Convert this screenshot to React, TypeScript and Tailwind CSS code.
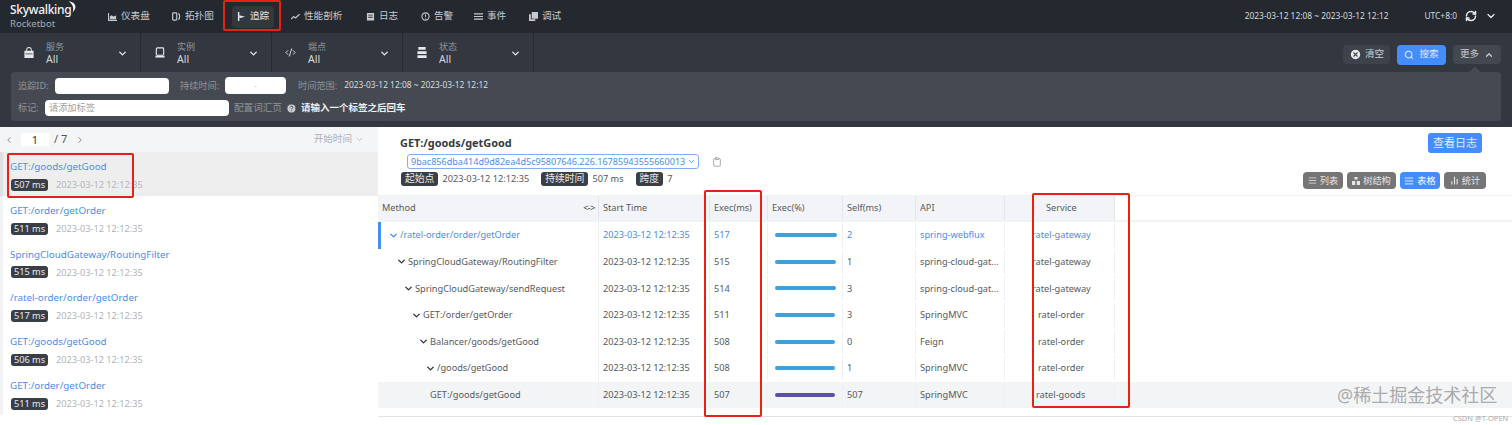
import type { ReactNode } from 'react'
import { ChevronDown, ChevronUp, ChevronLeft, ChevronRight, Search, RefreshCw, Code2, CircleHelp, CircleX, AlignJustify, BarChart2, Clipboard } from 'lucide-react'

const font = { fontFamily: '"Noto Sans", "Noto Sans CJK SC", sans-serif' }

function NavIcon({ name }: { name: string }) {
  const c = 'w-[9px] h-[9px] shrink-0'
  switch (name) {
    case 'chart':
      return <svg viewBox="0 0 10 10" className={c} fill="currentColor"><path d="M0 1h1.2v7.6H10V10H0z" /><path d="M2 8V5l2-1.5L6 5l3-1v4z" /></svg>
    case 'topo':
      return <svg viewBox="0 0 10 10" className={c} fill="none" stroke="currentColor" strokeWidth="1.3"><rect x="0.7" y="1" width="4.6" height="8" rx="1" /><path d="M7 1.5c2 .5 2 6.5 0 7" /></svg>
    case 'trace':
      return <svg viewBox="0 0 10 10" className={c} fill="currentColor"><path d="M1 0h1.6v10H1z" /><path d="M2.6 3.5L9 5.2 2.6 7z" /></svg>
    case 'perf':
      return <svg viewBox="0 0 10 10" className={c} fill="none" stroke="currentColor" strokeWidth="1.3"><path d="M0 8l3-3 2 1.6L9.5 2.5" /></svg>
    case 'log':
      return <svg viewBox="0 0 10 10" className={c} fill="currentColor"><path d="M1 1h8v8.5H1zM2.5 3v1h5V3zm0 2.4v1h5v-1z" fillRule="evenodd" /></svg>
    case 'alarm':
      return <svg viewBox="0 0 10 10" className={c} fill="none" stroke="currentColor" strokeWidth="1.2"><circle cx="5" cy="5" r="4" /><path d="M5 2.8v2.6M5 6.3v1" /></svg>
    case 'event':
      return <svg viewBox="0 0 10 10" className={c} fill="none" stroke="currentColor" strokeWidth="1.3"><path d="M0 2h10M0 5h10M0 8h10" /></svg>
    default:
      return <svg viewBox="0 0 10 10" className={c} fill="currentColor"><path d="M3 0h7v7.5H3z" /><path d="M0 2.5h2V8h5v2H0z" /></svg>
  }
}

const navItems = [
  { icon: 'chart', label: '仪表盘', cls: 'ml-[19px] w-[64px]' },
  { icon: 'topo', label: '拓扑图', cls: 'w-[65px]' },
  { icon: 'trace', label: '追踪', cls: 'w-[54px]', active: true },
  { icon: 'perf', label: '性能剖析', cls: 'w-[75px]' },
  { icon: 'log', label: '日志', cls: 'w-[55px]' },
  { icon: 'alarm', label: '告警', cls: 'w-[53px]' },
  { icon: 'event', label: '事件', cls: 'w-[55px]' },
  { icon: 'debug', label: '调试', cls: 'w-[50px]' },
]

function TopBar() {
  return (
    <div className="h-[33px] bg-[#24292f] flex items-center text-[#c6cad0] text-[9.6px] shrink-0">
      <div className="ml-[10px] w-[74px] shrink-0 leading-none">
        <div className="relative text-[#f1f3f5] text-[12px] font-medium tracking-tight h-[13px] -mt-[1px]">
          Skywalking
          <svg viewBox="0 0 10 12" className="absolute left-[58px] -top-[3px] w-[9px] h-[12px]" fill="#f1f3f5"><path d="M1 0c7 0 10 7 4 12 2-5 0-9-4-12z" /></svg>
        </div>
        <div className="text-[#a4a9b0] text-[9.5px] mt-[2px]">Rocketbot</div>
      </div>
      {navItems.map(n => (
        <div key={n.label} className={`${n.cls} shrink-0 flex items-center`}>
          <div className={`flex items-center gap-[4px] h-[22px] px-[5px] rounded-sm ${n.active ? 'bg-[#333840] text-[#e4e6ea]' : ''}`}>
            <NavIcon name={n.icon} />
            <span>{n.label}</span>
          </div>
        </div>
      ))}
      <div className="ml-auto flex items-center text-[#d7dade] text-[8.4px]">
        <span>2023-03-12 12:08 ~ 2023-03-12 12:12</span>
        <span className="ml-[36px]">UTC+8:0</span>
        <RefreshCw size={12} strokeWidth={3} className="ml-[8px] text-[#e8eaed]" />
        <ChevronDown size={12} strokeWidth={2.5} className="ml-[8px] mr-[15px] text-[#e8eaed]" />
      </div>
    </div>
  )
}

function FilterCell({ icon, label }: { icon: ReactNode; label: string }) {
  return (
    <div className="w-[131px] first:w-[141px] first:pl-[10px] h-[39px] border-r border-[#262a30] flex items-center shrink-0 relative">
      <div className="w-[36px] flex justify-end pr-[12px] text-[#e6e8eb]">{icon}</div>
      <div className="leading-[12px]">
        <div className="text-[#8f959c] text-[9px]">{label}</div>
        <div className="text-[#d5d8dc] text-[10.5px]">All</div>
      </div>
      <ChevronDown size={11} strokeWidth={3} className="absolute right-[12px] top-[15px] text-[#e6e8eb]" />
    </div>
  )
}

function FilterBar() {
  return (
    <div className="h-[94px] bg-[#333840] shrink-0 relative text-[9.2px]">
      <div className="h-[39px] flex items-center">
        <div className="flex">
          <FilterCell label="服务" icon={<svg viewBox="0 0 10 12" className="w-[10px] h-[11px]" fill="currentColor"><path d="M2 4V3a3 3 0 016 0v1h2v8H0V4zm1 0h4V3a2 2 0 00-4 0zM1.2 7v1h7.6V7z" fillRule="evenodd" /></svg>} />
          <FilterCell label="实例" icon={<svg viewBox="0 0 10 12" className="w-[10px] h-[11px]" fill="none" stroke="currentColor" strokeWidth="1.2"><rect x="1" y="1" width="8" height="8" rx="1" /><path d="M0 10.5h10" strokeWidth="2" /></svg>} />
          <FilterCell label="端点" icon={<Code2 size={11} strokeWidth={2} />} />
          <FilterCell label="状态" icon={<svg viewBox="0 0 10 12" className="w-[10px] h-[11px]" fill="currentColor"><path d="M1 0h8v3H1zM0 4.5h10v3H0zM0 9h10v3H0z" /></svg>} />
        </div>
        <div className="ml-auto mr-[11px] flex items-center gap-[7px] mt-[4px] text-[9.6px]">
          <button className="h-[19px] w-[47px] bg-[#3e434b] rounded-sm flex items-center justify-center gap-[3px] text-[#c9ccd1]"><CircleX size={13} fill="#e8e9eb" stroke="#3e434b" strokeWidth={2.5} />清空</button>
          <button className="h-[20px] w-[49px] bg-[#448dfe] rounded-sm flex items-center justify-center gap-[5px] text-[#dfeaff]"><Search size={10} strokeWidth={2.5} />搜索</button>
          <button className="h-[19px] w-[48px] bg-[#434850] rounded-sm flex items-center justify-center gap-[5px] text-[#c9ccd1]">更多<ChevronUp size={10} strokeWidth={3} /></button>
        </div>
      </div>
      <div className="relative mx-[11px] h-[49px] bg-[#454a52] text-[#8e939a] rounded-sm">
        <div className="absolute right-[22px] -top-[4px] w-[8px] h-[8px] rotate-45 bg-[#454a52]" />
        <div className="flex items-center h-[27px] pl-[7px]">
          <span className="w-[37px]">追踪ID:</span>
          <div className="w-[114px] h-[16px] bg-white rounded-sm" />
          <span className="ml-[11px] w-[45px]">持续时间:</span>
          <div className="w-[61px] h-[17px] bg-white rounded-sm flex items-center justify-center text-[#ccc]">-</div>
          <span className="ml-[12px]">时间范围:</span>
          <span className="ml-[7px] text-[#d8dbde] text-[8.4px]">2023-03-12 12:08 ~ 2023-03-12 12:12</span>
        </div>
        <div className="flex items-center h-[18px] pl-[7px]">
          <span className="w-[27px]">标记:</span>
          <div className="w-[184px] h-[16px] bg-white rounded-sm text-[#9a9fa6] pl-[4px] leading-[16px]">请添加标签</div>
          <span className="ml-[5px] text-[9.6px]">配置词汇页</span>
          <CircleHelp size={11} fill="#c8cbd0" stroke="#454a52" strokeWidth={2} className="ml-[4px]" />
          <span className="ml-[4px] text-[#eef0f2] font-bold text-[9.5px]">请输入一个标签之后回车</span>
        </div>
      </div>
    </div>
  )
}

const traces = [
  ['GET:/goods/getGood', '507 ms'],
  ['GET:/order/getOrder', '511 ms'],
  ['SpringCloudGateway/RoutingFilter', '515 ms'],
  ['/ratel-order/order/getOrder', '517 ms'],
  ['GET:/goods/getGood', '506 ms'],
  ['GET:/order/getOrder', '511 ms'],
]

function TraceList() {
  return (
    <div className="w-[378px] shrink-0 overflow-hidden">
      <div className="h-[25px] bg-[#f4f5f7] flex items-center text-[#555]">
        <ChevronLeft size={10} strokeWidth={2} className="ml-[4px] text-[#777]" />
        <div className="ml-[7px] w-[28px] h-[13px] bg-white text-center text-[11px] leading-[13px] text-[#333]">1</div>
        <span className="ml-[5px] text-[11px]">/ 7</span>
        <ChevronRight size={10} strokeWidth={2} className="ml-[8px] text-[#777]" />
        <span className="ml-auto text-[#aeb2b8] text-[9.6px]">开始时间</span>
        <ChevronDown size={9} strokeWidth={2} className="ml-[3px] mr-[14px] text-[#aeb2b8]" />
      </div>
      {traces.map(([name, ms], i) => (
        <div key={i} className={`h-[43.8px] pt-[6px] pl-[7px] border-l-[3px] ${i === 0 ? 'bg-[#eeeeee] border-[#dfe0e2]' : 'bg-white border-[#f2f3f5]'}`}>
          <div className="text-[#4a8dea] text-[9.8px] leading-[18px]">{name}</div>
          <div className="flex items-center mt-[2px] -ml-[6px] pl-[7px]">
            <span className="h-[12px] w-[37px] text-center rounded-[3px] bg-[#3a3f47] text-[#e8e9eb] text-[9.2px] leading-[12px]">{ms}</span>
            <span className="ml-[8px] text-[#b2b5ba] text-[9.2px]">2023-03-12 12:12:35</span>
          </div>
        </div>
      ))}
    </div>
  )
}

const rows = [
  { m: '/ratel-order/order/getOrder', indent: 10, exec: '517', self: '2', api: 'spring-webflux', svc: 'ratel-gateway', pad: 'pl-[27px]', w: 62, blue: true, open: true },
  { m: 'SpringCloudGateway/RoutingFilter', indent: 18, exec: '515', self: '1', api: 'spring-cloud-gat...', svc: 'ratel-gateway', pad: 'pl-[27px]', w: 61, open: true },
  { m: 'SpringCloudGateway/sendRequest', indent: 25, exec: '514', self: '3', api: 'spring-cloud-gat...', svc: 'ratel-gateway', pad: 'pl-[27px]', w: 61, open: true },
  { m: 'GET:/order/getOrder', indent: 33, exec: '511', self: '3', api: 'SpringMVC', svc: 'ratel-order', pad: 'pl-[33px]', w: 60, open: true },
  { m: 'Balancer/goods/getGood', indent: 40, exec: '508', self: '0', api: 'Feign', svc: 'ratel-order', pad: 'pl-[33px]', w: 60, open: true },
  { m: '/goods/getGood', indent: 47, exec: '508', self: '1', api: 'SpringMVC', svc: 'ratel-order', pad: 'pl-[33px]', w: 60, open: true },
  { m: 'GET:/goods/getGood', indent: 52, exec: '507', self: '507', api: 'SpringMVC', svc: 'ratel-goods', pad: 'pl-[31px]', w: 60, purple: true, open: false, hl: true },
]

const grid = 'grid grid-cols-[221px_111px_58px_75px_73px_89px_110px_1fr]'

function TraceTable() {
  const th = 'flex items-center pl-[4px] border-r border-[#e3e5ea] h-full bg-[#f3f4f8]'
  const td = 'flex items-center pl-[4px] border-r border-[#eff0f2] h-[24px] truncate'
  return (
    <div className="text-[9.2px] text-[#555a60]">
      <div className={`${grid} h-[27px] border-t border-[#f0f1f3] border-b-2 border-b-[#f2f3f5]`}>
        <div className={`${th} pl-[3px] justify-between pr-[3px]`}>Method<span className="text-[#444] text-[9px] tracking-tighter">&lt;-&gt;</span></div>
        <div className={th}>Start Time</div>
        <div className={th}>Exec(ms)</div>
        <div className={th}>Exec(%)</div>
        <div className={th}>Self(ms)</div>
        <div className={th}>API</div>
        <div className={`${th} pl-[41px]`}>Service</div>
        <div />
      </div>
      {rows.map((r, i) => (
        <div key={i} className={`${grid} h-[26.6px] items-center ${r.hl ? 'bg-[#f3f4f5]' : ''} ${r.blue ? 'text-[#4a8dea]' : ''}`}>
          <div className={`relative ${td} h-[26.6px]`} style={{ paddingLeft: r.indent }}>
            {r.blue && <div className="absolute left-0 top-0 w-[3px] h-full bg-[#448dfe]" />}
            {r.open ? <ChevronDown size={11} strokeWidth={3} className={`shrink-0 mr-[1px] ${r.blue ? 'text-[#448dfe]' : 'text-[#333]'}`} /> : null}
            <span>{r.m}</span>
          </div>
          <div className={td}>2023-03-12 12:12:35</div>
          <div className={td}>{r.exec}</div>
          <div className={`${td} pl-[7px]`}>
            <div className={`h-[4px] rounded-full ${r.purple ? 'bg-[#5b4fa8]' : 'bg-[#3ea0dc]'}`} style={{ width: r.w }} />
          </div>
          <div className={td}>{r.self}</div>
          <div className={td}>{r.api}</div>
          <div className={`${td} ${r.pad}`}>{r.svc}</div>
          <div />
        </div>
      ))}
      <div className="mt-[8px] border-t border-[#e2e3e5]" />
    </div>
  )
}

function Detail() {
  const tag = 'h-[14px] px-[4px] rounded-[3px] bg-[#3a3f47] text-[#e8e9eb] text-[9.8px] leading-[14px]'
  const view = 'h-[17px] rounded-sm flex items-center justify-center gap-[3px] text-[9.2px]'
  return (
    <div className="flex-1 min-w-0">
      <div className="h-[68px] relative">
        <div className="pt-[6px] pl-[22px] text-[10.9px] font-bold text-[#333a42] leading-[20px]">GET:/goods/getGood</div>
        <div className="flex items-center pl-[29px] mt-[1px]">
          <div className="w-[292px] h-[15px] border border-[#7fb0f5] rounded-[3px] text-[#4a8dea] text-[9.05px] leading-[13px] pl-[3px] flex items-center whitespace-nowrap">
            9bac856dba414d9d82ea4d5c95807646.226.16785943555660013
            <ChevronDown size={9} strokeWidth={2.5} className="ml-auto mr-[2px] shrink-0" />
          </div>
          <Clipboard size={10} className="ml-[13px] text-[#999]" />
        </div>
        <div className="flex items-center pl-[23px] mt-[3px] text-[9.2px] text-[#555a60]">
          <span className={tag}>起始点</span>
          <span className="ml-[4px]">2023-03-12 12:12:35</span>
          <span className={`${tag} ml-[12px]`}>持续时间</span>
          <span className="ml-[4px]">507 ms</span>
          <span className={`${tag} ml-[12px]`}>跨度</span>
          <span className="ml-[4px]">7</span>
        </div>
        <div className="absolute right-[30px] top-[6px] w-[54px] h-[20px] bg-[#448dfe] rounded-[3px] text-[#e4eeff] text-[11px] flex items-center justify-center">查看日志</div>
        <div className="absolute right-[26px] top-[45px] flex gap-[4px] text-[#e6e6e6]">
          <div className={`${view} w-[40px] bg-[#757575]`}><AlignJustify size={9} />列表</div>
          <div className={`${view} w-[49px] bg-[#757575]`}><svg viewBox="0 0 10 10" className="w-[8px] h-[8px]" fill="currentColor"><path d="M3 0h4v3H3zM0 5h4v5H0zM6 5h4v5H6z" /></svg>树结构</div>
          <div className={`${view} w-[40px] bg-[#448dfe] text-white`}><AlignJustify size={10} />表格</div>
          <div className={`${view} w-[42px] bg-[#757575]`}><BarChart2 size={9} strokeWidth={3} />统计</div>
        </div>
      </div>
      <TraceTable />
    </div>
  )
}

function Mark({ cls }: { cls: string }) {
  return <div className={`absolute border-2 border-[#e8201a] rounded-[2px] pointer-events-none ${cls}`} />
}

export default function App() {
  return (
    <div className="relative w-[1512px] h-[425px] overflow-hidden bg-white flex flex-col" style={font}>
      <TopBar />
      <FilterBar />
      <div className="flex-1 flex min-h-0">
        <TraceList />
        <Detail />
      </div>
      <Mark cls="left-[223px] top-0 w-[58px] h-[31px]" />
      <Mark cls="left-[7px] top-[153px] w-[127px] h-[45px]" />
      <Mark cls="left-[704px] top-[190px] w-[58px] h-[227px]" />
      <Mark cls="left-[1032px] top-[193px] w-[98px] h-[215px]" />
      <div className="absolute left-[1337px] top-[382px] text-[18px] text-[#a9abad] leading-[26px]">@稀土掘金技术社区</div>
      <div className="absolute left-[1453px] top-[413px] text-[7.5px] text-[#a9abad] leading-[10px]">CSDN @T-OPEN</div>
    </div>
  )
}
